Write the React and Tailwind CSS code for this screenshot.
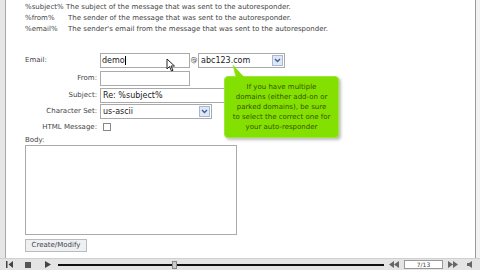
import React from "react";

const f = { fontFamily: '"DejaVu Sans", Verdana, sans-serif' };

function Arrow() {
  return (
    <div className="w-[11px] h-[11px] mt-[1px] mr-[1px] border border-[#a9b8d6] bg-[#dfe7f5] flex items-center justify-center">
      <svg width="7" height="5" viewBox="0 0 7 5"><path d="M1 1 L3.5 3.5 L6 1" stroke="#3a5a9a" strokeWidth="1.3" fill="none" /></svg>
    </div>
  );
}

export default function App() {
  return (
    <div className="w-[480px] h-[270px] relative bg-white overflow-hidden text-[#444] flex flex-col" style={f}>
      <div className="flex flex-1 min-h-0">
        <div className="w-[6px] bg-[#e6e6e6] border-r border-[#a8a8a8]" />
        <div className="flex-1 pl-[19px] pt-[2px] text-[7px] leading-[11px] relative">
          <div className="flex"><span className="w-[41px]">%subject%</span><span>The subject of the message that was sent to the autoresponder.</span></div>
          <div className="flex"><span className="w-[43px]">%from%</span><span>The sender of the message that was sent to the autoresponder.</span></div>
          <div className="flex"><span className="w-[43px]">%email%</span><span>The sender's email from the message that was sent to the autoresponder.</span></div>

          <div className="mt-[18px] flex items-start h-[15px]">
            <span className="w-[75px] text-[7px] leading-[15px] text-[#444]">Email:</span>
            <div className="w-[90px] h-[15px] border border-[#aaa] text-[8px] leading-[13px] px-[1px] text-[#222]">demo<span className="inline-block w-px h-[9px] bg-black align-middle" /></div>
            <span className="w-[8px] text-center text-[7px] leading-[15px]">@</span>
            <div className="w-[87px] h-[15px] border border-[#aaa] flex justify-between">
              <span className="text-[8px] leading-[13px] px-[2px] text-[#222]">abc123.com</span>
              <Arrow />
            </div>
          </div>

          <div className="mt-[3px] flex items-start h-[15px]">
            <span className="w-[72px] text-right text-[7px] leading-[15px] text-[#444]">From:</span>
            <div className="ml-[3px] w-[90px] h-[15px] border border-[#aaa]" />
          </div>

          <div className="mt-[2px] flex items-start h-[15px]">
            <span className="w-[72px] text-right text-[7px] leading-[15px] text-[#444]">Subject:</span>
            <div className="ml-[3px] w-[130px] h-[15px] border border-[#aaa] text-[8px] leading-[13px] px-[2px] text-[#222]">Re: %subject%</div>
          </div>

          <div className="mt-[1px] flex items-start h-[15px]">
            <span className="w-[72px] text-right text-[7px] leading-[15px] text-[#444]">Character Set:</span>
            <div className="ml-[3px] w-[112px] h-[15px] border border-[#aaa] flex justify-between">
              <span className="text-[8px] leading-[13px] px-[2px] text-[#222]">us-ascii</span>
              <Arrow />
            </div>
          </div>

          <div className="mt-[2px] flex items-center h-[12px]">
            <span className="w-[72px] text-right text-[7px] leading-[12px] text-[#444]">HTML Message:</span>
            <div className="ml-[6px] w-[8px] h-[8px] border border-[#888]" />
          </div>

          <div className="mt-[3px] text-[7px] leading-[9px] text-[#444]">Body:</div>
          <div className="w-[212px] h-[90px] border border-[#aaa]" />
          <div className="mt-[4px] w-[62px] h-[13px] border border-[#bbb] bg-[#eef0f3] text-[7px] leading-[11px] text-center text-[#444]">Create/Modify</div>

          <svg className="absolute left-[160px] top-[58px]" width="10" height="14" viewBox="0 0 10 14">
            <path d="M1 1 L1 11 L3.5 8.5 L5.5 13 L7 12.3 L5 8 L8.5 8 Z" fill="white" stroke="#222" strokeWidth="1" />
          </svg>

          <div className="absolute left-[218px] top-[76px] w-[115px] h-[62px] rounded-[4px] bg-[#84e000] border border-[#9be83a] shadow-[2px_2px_3px_rgba(0,0,0,0.25)] flex items-center justify-center text-center text-[7px] leading-[10px] text-[#3a5200]">
            <div>If you have multiple<br />domains (either add-on or<br />parked domains), be sure<br />to select the correct one for<br />your auto-responder</div>
          </div>
          <svg className="absolute left-[224px] top-[65px]" width="16" height="13" viewBox="0 0 16 13">
            <path d="M3 0 L15 13 L6 13 Z" fill="#84e000" />
            <path d="M3 0 L6 12" stroke="#9be83a" strokeWidth="0.8" />
          </svg>
        </div>
        <div className="w-[5px] border-l border-[#9a9a9a] bg-[#f2f2f2]" />
      </div>

      <div className="h-[12px] bg-[#e4e4e4] border-t border-[#d0d0d0] flex items-center text-[#444]">
        <div className="w-[16px] flex justify-center ml-[2px]">
          <svg width="8" height="7" viewBox="0 0 8 7"><rect x="0" y="0" width="1.5" height="7" fill="#444" /><path d="M7 0 L2.5 3.5 L7 7 Z" fill="#444" /></svg>
        </div>
        <div className="w-[20px] flex justify-center">
          <svg width="6" height="6" viewBox="0 0 6 6"><rect width="6" height="6" fill="#555" /></svg>
        </div>
        <div className="w-[20px] flex justify-center">
          <svg width="6" height="7" viewBox="0 0 6 7"><path d="M0 0 L6 3.5 L0 7 Z" fill="#444" /></svg>
        </div>
        <div className="relative w-[326px] h-[12px] flex items-center">
          <div className="w-full h-[2px] bg-[#111]" />
          <div className="absolute left-[114px] top-[2px] w-[5px] h-[8px] bg-[#ccc] border border-[#888]" />
        </div>
        <div className="w-[20px] flex justify-center">
          <svg width="10" height="7" viewBox="0 0 10 7"><path d="M5 0 L0 3.5 L5 7 Z M10 0 L5 3.5 L10 7 Z" fill="#666" /></svg>
        </div>
        <div className="w-[39px] h-[9px] bg-white border border-[#999] text-[6px] leading-[7px] text-center">7/13</div>
        <div className="w-[20px] flex justify-center">
          <svg width="10" height="7" viewBox="0 0 10 7"><path d="M0 0 L5 3.5 L0 7 Z M5 0 L10 3.5 L5 7 Z" fill="#666" /></svg>
        </div>
        <div className="w-[14px] flex justify-center">
          <svg width="7" height="7" viewBox="0 0 7 7"><path d="M0 2 L2 2 L5 0 L5 7 L2 5 L0 5 Z" fill="#666" /></svg>
        </div>
      </div>
    </div>
  );
}
